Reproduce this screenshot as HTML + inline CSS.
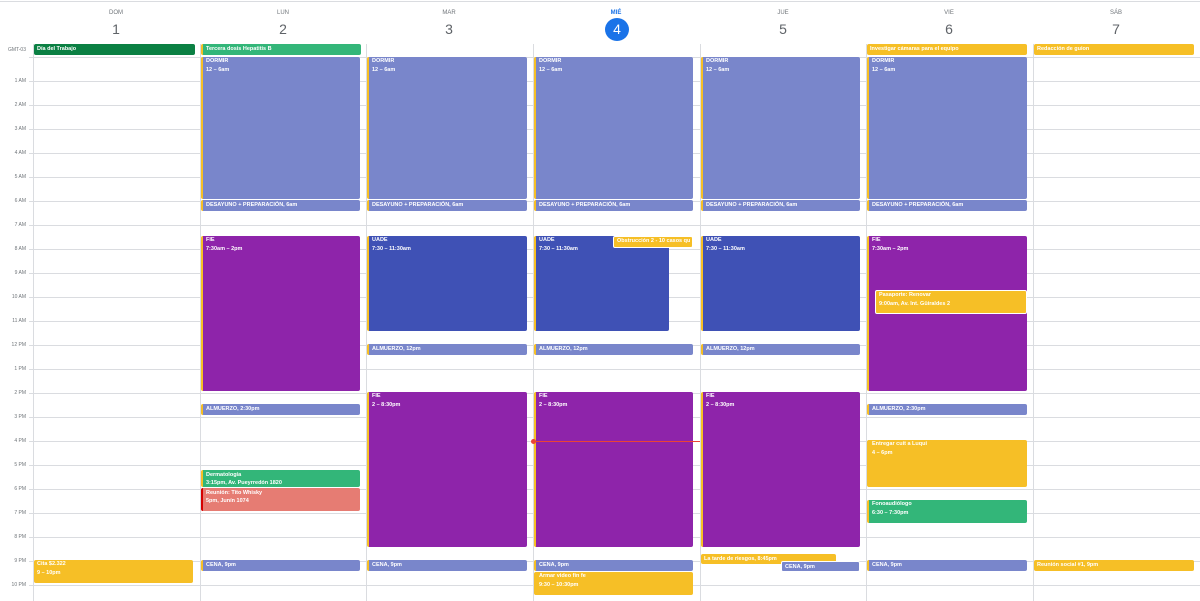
<!DOCTYPE html>
<html><head><meta charset="utf-8"><style>
*{margin:0;padding:0;box-sizing:border-box}
body{width:1200px;height:601px;position:relative;overflow:hidden;background:#fff;font-family:"Liberation Sans",sans-serif}
.hl{position:absolute;left:29px;right:0;height:1px;background:#dadce0}
.vl{position:absolute;top:44px;bottom:0;width:1px;background:#dadce0}
.tl{position:absolute;left:0;width:26px;text-align:right;font-size:5px;color:#70757a;line-height:6px}
.dn{position:absolute;top:10px;width:166px;text-align:center;font-size:6px;color:#70757a}
.dd{position:absolute;top:20px;width:166px;text-align:center;font-size:14px;color:#5f6368;line-height:18px}
.e{position:absolute;color:#fff;font-size:5.5px;font-weight:bold;line-height:9px;padding:0 3px;border-radius:2px;overflow:hidden;white-space:nowrap;border-left:2px solid #f6bf26}
.n{border-left:none}
.dorm{background:#7986cb}.pur{background:#8e24aa}.blu{background:#3f51b5}.yel{background:#f6bf26}.grn{background:#33b679}.dg{background:#0b8043}.sal{background:#e67c73}
</style></head><body>
<div style="position:absolute;left:0;right:0;top:1px;height:1px;background:#dadce0"></div>

<div class="dn" style="left:33px">DOM</div><div class="dd" style="left:33px">1</div>
<div class="dn" style="left:200px">LUN</div><div class="dd" style="left:200px">2</div>
<div class="dn" style="left:366px">MAR</div><div class="dd" style="left:366px">3</div>
<div class="dn" style="left:533px;color:#1a73e8;font-weight:bold">MIÉ</div>
<div style="position:absolute;left:605px;top:18px;width:24px;height:23px;border-radius:50%;background:#1a73e8;color:#fff;font-size:14px;text-align:center;line-height:23px">4</div>
<div class="dn" style="left:700px">JUE</div><div class="dd" style="left:700px">5</div>
<div class="dn" style="left:866px">VIE</div><div class="dd" style="left:866px">6</div>
<div class="dn" style="left:1033px">SÁB</div><div class="dd" style="left:1033px">7</div>

<div class="vl" style="left:33px"></div><div class="vl" style="left:200px"></div><div class="vl" style="left:366px"></div><div class="vl" style="left:533px"></div><div class="vl" style="left:700px"></div><div class="vl" style="left:866px"></div><div class="vl" style="left:1033px"></div>

<div class="hl" style="top:57px"></div><div class="hl" style="top:81px"></div><div class="hl" style="top:105px"></div><div class="hl" style="top:129px"></div><div class="hl" style="top:153px"></div><div class="hl" style="top:177px"></div><div class="hl" style="top:201px"></div><div class="hl" style="top:225px"></div><div class="hl" style="top:249px"></div><div class="hl" style="top:273px"></div><div class="hl" style="top:297px"></div><div class="hl" style="top:321px"></div><div class="hl" style="top:345px"></div><div class="hl" style="top:369px"></div><div class="hl" style="top:393px"></div><div class="hl" style="top:417px"></div><div class="hl" style="top:441px"></div><div class="hl" style="top:465px"></div><div class="hl" style="top:489px"></div><div class="hl" style="top:513px"></div><div class="hl" style="top:537px"></div><div class="hl" style="top:561px"></div><div class="hl" style="top:585px"></div>

<div class="tl" style="top:47px">GMT-03</div>
<div class="tl" style="top:78px">1 AM</div><div class="tl" style="top:102px">2 AM</div><div class="tl" style="top:126px">3 AM</div><div class="tl" style="top:150px">4 AM</div><div class="tl" style="top:174px">5 AM</div><div class="tl" style="top:198px">6 AM</div><div class="tl" style="top:222px">7 AM</div><div class="tl" style="top:246px">8 AM</div><div class="tl" style="top:270px">9 AM</div><div class="tl" style="top:294px">10 AM</div><div class="tl" style="top:318px">11 AM</div><div class="tl" style="top:342px">12 PM</div><div class="tl" style="top:366px">1 PM</div><div class="tl" style="top:390px">2 PM</div><div class="tl" style="top:414px">3 PM</div><div class="tl" style="top:438px">4 PM</div><div class="tl" style="top:462px">5 PM</div><div class="tl" style="top:486px">6 PM</div><div class="tl" style="top:510px">7 PM</div><div class="tl" style="top:534px">8 PM</div><div class="tl" style="top:558px">9 PM</div><div class="tl" style="top:582px">10 PM</div>

<div class="e n dg" style="left:34px;top:44px;width:161px;height:11px;line-height:11px">Día del Trabajo</div>
<div class="e grn" style="left:201px;top:44px;width:160px;height:11px;line-height:11px">Tercera dosis Hepatitis B</div>
<div class="e n yel" style="left:867px;top:44px;width:160px;height:11px;line-height:11px">Investigar cámaras para el equipo</div>
<div class="e n yel" style="left:1034px;top:44px;width:160px;height:11px;line-height:11px">Redacción de guion</div>

<div class="e dorm" style="left:201px;top:57px;width:159px;height:142px">DORMIR<br>12 – 6am</div>
<div class="e dorm" style="left:367px;top:57px;width:160px;height:142px">DORMIR<br>12 – 6am</div>
<div class="e dorm" style="left:534px;top:57px;width:159px;height:142px">DORMIR<br>12 – 6am</div>
<div class="e dorm" style="left:701px;top:57px;width:159px;height:142px">DORMIR<br>12 – 6am</div>
<div class="e dorm" style="left:867px;top:57px;width:160px;height:142px">DORMIR<br>12 – 6am</div>
<div class="e dorm" style="left:201px;top:200px;width:159px;height:11px;line-height:11px">DESAYUNO + PREPARACIÓN, 6am</div>
<div class="e dorm" style="left:367px;top:200px;width:160px;height:11px;line-height:11px">DESAYUNO + PREPARACIÓN, 6am</div>
<div class="e dorm" style="left:534px;top:200px;width:159px;height:11px;line-height:11px">DESAYUNO + PREPARACIÓN, 6am</div>
<div class="e dorm" style="left:701px;top:200px;width:159px;height:11px;line-height:11px">DESAYUNO + PREPARACIÓN, 6am</div>
<div class="e dorm" style="left:867px;top:200px;width:160px;height:11px;line-height:11px">DESAYUNO + PREPARACIÓN, 6am</div>

<div class="e pur" style="left:201px;top:236px;width:159px;height:155px">FIE<br>7:30am – 2pm</div>
<div class="e blu" style="left:367px;top:236px;width:160px;height:95px">UADE<br>7:30 – 11:30am</div>
<div class="e blu" style="left:534px;top:236px;width:135px;height:95px">UADE<br>7:30 – 11:30am</div>
<div class="e n yel" style="left:613px;top:236px;width:80px;height:12px;border:1px solid #fff">Obstrucción 2 - 10 casos qu</div>
<div class="e blu" style="left:701px;top:236px;width:159px;height:95px">UADE<br>7:30 – 11:30am</div>
<div class="e pur" style="left:867px;top:236px;width:160px;height:155px">FIE<br>7:30am – 2pm</div>
<div class="e n yel" style="left:875px;top:290px;width:152px;height:24px;border:1px solid #fff">Pasaporte: Renovar<br>9:00am, Av. Int. Güiraldes 2</div>

<div class="e dorm" style="left:367px;top:344px;width:160px;height:11px;line-height:11px">ALMUERZO, 12pm</div>
<div class="e dorm" style="left:534px;top:344px;width:159px;height:11px;line-height:11px">ALMUERZO, 12pm</div>
<div class="e dorm" style="left:701px;top:344px;width:159px;height:11px;line-height:11px">ALMUERZO, 12pm</div>

<div class="e pur" style="left:367px;top:392px;width:160px;height:155px">FIE<br>2 – 8:30pm</div>
<div class="e pur" style="left:534px;top:392px;width:159px;height:155px">FIE<br>2 – 8:30pm</div>
<div class="e pur" style="left:701px;top:392px;width:159px;height:155px">FIE<br>2 – 8:30pm</div>

<div class="e dorm" style="left:201px;top:404px;width:159px;height:11px;line-height:11px">ALMUERZO, 2:30pm</div>
<div class="e dorm" style="left:867px;top:404px;width:160px;height:11px;line-height:11px">ALMUERZO, 2:30pm</div>

<div class="e grn" style="left:201px;top:470px;width:159px;height:17px;line-height:8px;padding-top:1px">Dermatología<br>3:15pm, Av. Pueyrredón 1820</div>
<div class="e sal" style="left:201px;top:488px;width:159px;height:23px;line-height:8px;padding-top:1px;border-left-color:#d50000">Reunión: Tito Whisky<br>5pm, Junín 1074</div>

<div class="e yel" style="left:867px;top:440px;width:160px;height:47px">Entregar cuit a Luqui<br>4 – 6pm</div>
<div class="e grn" style="left:867px;top:500px;width:160px;height:23px">Fonoaudiólogo<br>6:30 – 7:30pm</div>

<div class="e n yel" style="left:34px;top:560px;width:159px;height:23px">Cita $2.322<br>9 – 10pm</div>
<div class="e dorm" style="left:201px;top:560px;width:159px;height:11px;line-height:11px">CENA, 9pm</div>
<div class="e dorm" style="left:367px;top:560px;width:160px;height:11px;line-height:11px">CENA, 9pm</div>
<div class="e dorm" style="left:534px;top:560px;width:159px;height:11px;line-height:11px">CENA, 9pm</div>
<div class="e yel" style="left:534px;top:572px;width:159px;height:23px">Armar video fin fe<br>9:30 – 10:30pm</div>
<div class="e n yel" style="left:701px;top:554px;width:135px;height:10px;line-height:10px">La tarde de riesgos, 8:45pm</div>
<div class="e n dorm" style="left:781px;top:561px;width:79px;height:11px;line-height:11px;border:1px solid #fff">CENA, 9pm</div>
<div class="e dorm" style="left:867px;top:560px;width:160px;height:11px;line-height:11px">CENA, 9pm</div>
<div class="e n yel" style="left:1034px;top:560px;width:160px;height:11px;line-height:11px">Reunión social #1, 9pm</div>

<div style="position:absolute;z-index:10;left:533px;top:441px;width:167px;height:1px;background:#ea4335"></div>
<div style="position:absolute;z-index:10;left:531px;top:439px;width:5px;height:5px;border-radius:50%;background:#ea4335"></div>
</body></html>
